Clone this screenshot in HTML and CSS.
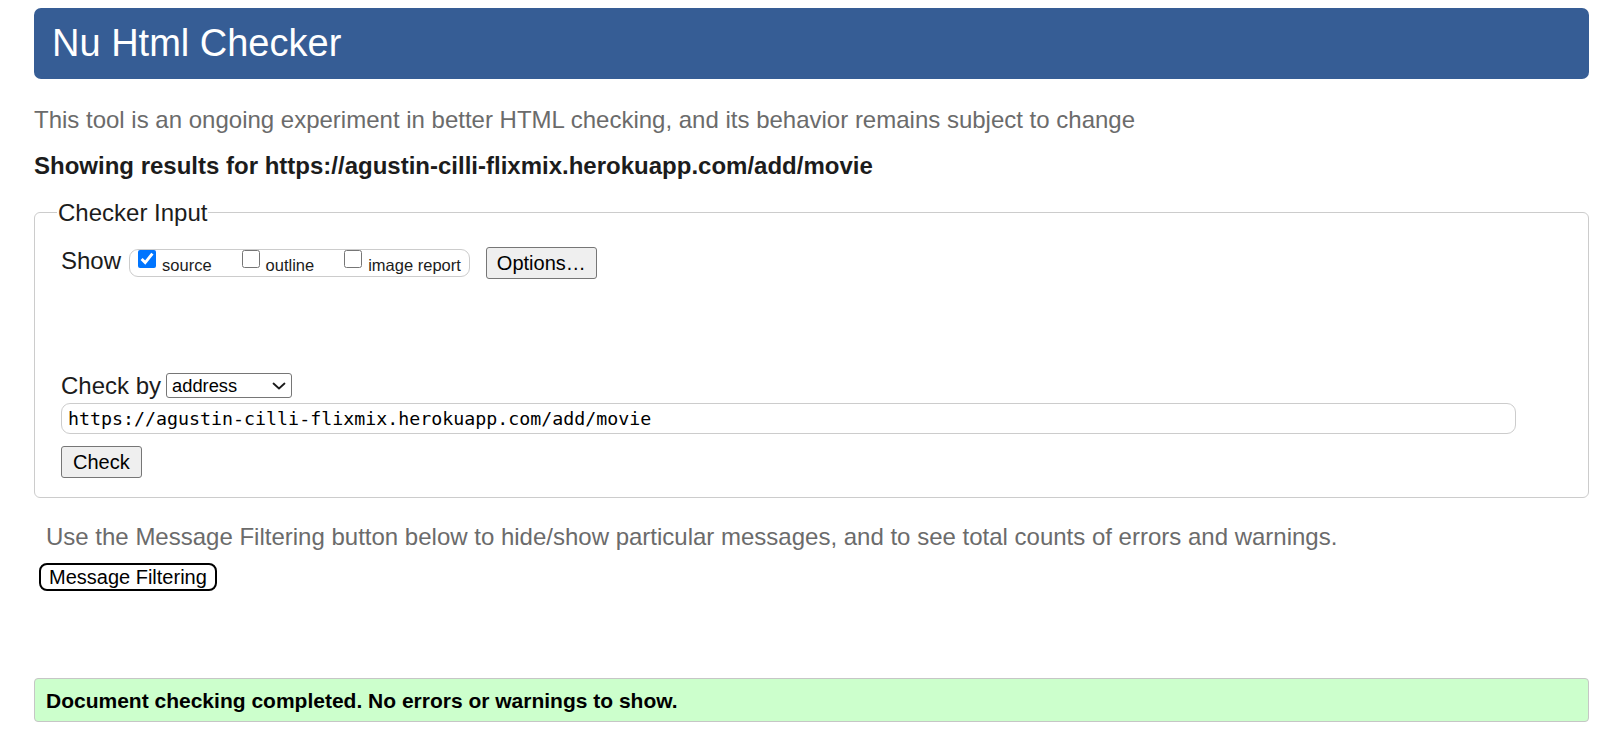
FILE: index.html
```html
<!DOCTYPE html>
<html lang="en">
<head>
<meta charset="utf-8">
<title>Nu Html Checker</title>
<link rel="stylesheet" href="styles.css">
</head>
<body>
<h1 class="title">Nu Html Checker</h1>
<p class="intro">This tool is an ongoing experiment in better HTML checking, and its behavior remains subject to change</p>
<p class="showing">Showing results for https://agustin-cilli-flixmix.herokuapp.com/add/movie</p>
<form class="checker">
  <fieldset class="fs">
    <legend class="legend">Checker Input</legend>
    <div class="show-row">
      <span class="lbl lbl-show">Show</span>
      <span class="opts">
        <label class="opt"><input class="cb" type="checkbox" checked><span class="opt-text">source</span></label>
        <label class="opt"><input class="cb" type="checkbox"><span class="opt-text">outline</span></label>
        <label class="opt"><input class="cb" type="checkbox"><span class="opt-text">image report</span></label>
      </span>
      <button type="button" class="btn btn-options">Options…</button>
    </div>
    <div class="by-row">
      <span class="lbl">Check by</span>
      <span class="sel-wrap">
        <select class="sel"><option>address</option></select>
        <svg class="chev" width="14" height="8" viewBox="0 0 14 8" aria-hidden="true"><path d="M1.5 1.5 L7 6.5 L12.5 1.5" fill="none" stroke="#1a1a1a" stroke-width="1.8" stroke-linecap="round" stroke-linejoin="round"/></svg>
      </span>
    </div>
    <div class="url-row">
      <input class="url" type="text" value="https://agustin-cilli-flixmix.herokuapp.com/add/movie">
    </div>
    <div class="check-row">
      <button type="button" class="btn btn-check">Check</button>
    </div>
  </fieldset>
</form>
<p class="filter-note">Use the Message Filtering button below to hide/show particular messages, and to see total counts of errors and warnings.</p>
<button type="button" class="filter-btn">Message Filtering</button>
<div class="success">Document checking completed. No errors or warnings to show.</div>
</body>
</html>
```
FILE: styles.css
```css
html {
  background: #ffffff;
}

body {
  margin: 0;
  padding: 8px 12px 20px 34px;
  font-family: "Liberation Sans", Arial, sans-serif;
  font-size: 24px;
  line-height: 27px;
  color: #1c1c1c;
  background: #ffffff;
}

.title {
  margin: 0;
  padding: 12px 18px;
  font-size: 38px;
  line-height: 47px;
  font-weight: normal;
  color: #ffffff;
  background: #365d95;
  border-radius: 7px;
}

.intro {
  margin: 27px 0 0;
  color: #6b6b6b;
}

.showing {
  margin: 19px 0 0;
  font-weight: bold;
  color: #1c1c1c;
}

.checker {
  margin: 20px 0 0;
}

.fs {
  margin: 0;
  padding: 21px 26px 19px;
  border: 1px solid #cccccc;
  border-radius: 6px;
  min-width: 0;
}

.legend {
  padding: 0 1px;
  margin-left: -4px;
  font-size: 24px;
  line-height: 27px;
}

.show-row {
  display: flex;
  align-items: center;
}

.lbl {
  font-size: 24px;
  line-height: 27px;
}

.lbl-show {
  align-self: flex-start;
}

.opts {
  display: flex;
  align-items: flex-start;
  gap: 30px;
  box-sizing: border-box;
  height: 28px;
  margin-left: 8px;
  padding: 0 8px;
  border: 1px solid #cccccc;
  border-radius: 9px;
}

.opt {
  display: flex;
  align-items: flex-start;
}

.cb {
  width: 18px;
  height: 18px;
  margin: 0 6px 0 0;
}

.opt-text {
  margin-top: 4px;
  font-size: 16.5px;
  line-height: 22px;
  color: #1c1c1c;
}

.btn {
  box-sizing: border-box;
  height: 32px;
  padding: 0 11px;
  font-family: "Liberation Sans", Arial, sans-serif;
  font-size: 20px;
  color: #000000;
  background: #efefef;
  border: 1px solid #767676;
  border-radius: 3px;
}

.btn-options {
  margin-left: 16px;
  padding: 0 10px;
}

.by-row {
  display: flex;
  align-items: center;
  margin-top: 93px;
}

.sel-wrap {
  position: relative;
  display: block;
  margin-left: 5px;
}

.sel {
  display: block;
  box-sizing: border-box;
  width: 126px;
  height: 25px;
  margin: 0;
  padding: 0 0 0 5px;
  font-family: "Liberation Sans", Arial, sans-serif;
  font-size: 18.3px;
  color: #000000;
  background: #ffffff;
  border: 1px solid #767676;
  border-radius: 3px;
  appearance: none;
  -webkit-appearance: none;
}

.chev {
  position: absolute;
  right: 6px;
  top: 9px;
  pointer-events: none;
}

.url-row {
  margin-top: 4px;
}

.url {
  box-sizing: border-box;
  display: block;
  width: calc(100% - 46px);
  height: 31px;
  margin: 0;
  padding: 0 6px;
  font-family: "DejaVu Sans Mono", "Liberation Mono", monospace;
  font-size: 18.3px;
  color: #000000;
  background: #ffffff;
  border: 1px solid #cccccc;
  border-radius: 9px;
  outline: none;
}

.check-row {
  margin-top: 12px;
}

.filter-note {
  margin: 25px 0 0 12px;
  color: #6b6b6b;
}

.filter-btn {
  display: block;
  box-sizing: border-box;
  height: 28px;
  margin: 13px 0 0 5px;
  padding: 0 8px;
  font-family: "Liberation Sans", Arial, sans-serif;
  font-size: 20px;
  color: #000000;
  background: #ffffff;
  border: 2px solid #000000;
  border-radius: 8px;
}

.success {
  margin-top: 87px;
  padding: 10px 11px 8px;
  font-size: 21px;
  line-height: 24px;
  font-weight: bold;
  color: #000000;
  background: #ccffcc;
  border: 1px solid #c6c6c6;
  border-radius: 4px;
}
```
